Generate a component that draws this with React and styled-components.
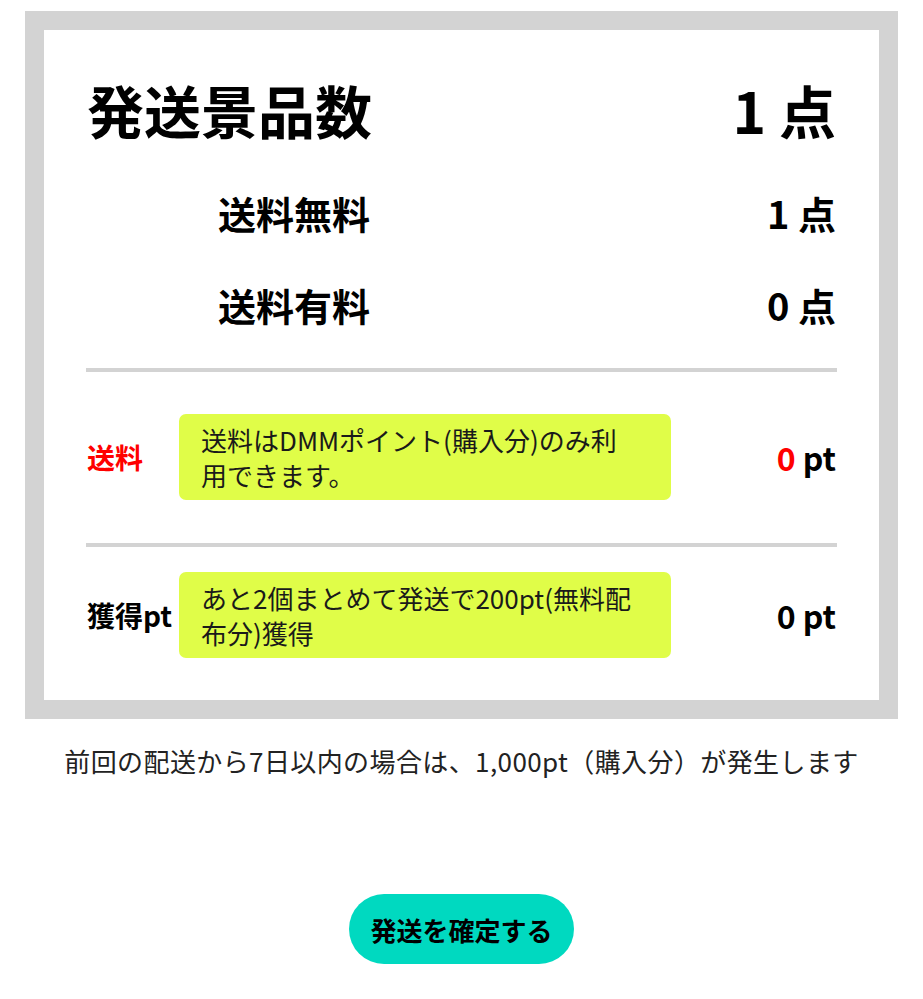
import React from "react";
import styled, { createGlobalStyle } from "styled-components";

const GlobalStyle = createGlobalStyle`
  html, body {
    margin: 0;
    padding: 0;
    background: #ffffff;
  }
  body {
    font-family: "Noto Sans CJK JP", "Noto Sans", sans-serif;
    color: #000;
  }
`;

const Page = styled.div`
  padding: 11px 25px 0;
  display: flex;
  flex-direction: column;
  align-items: stretch;
`;

const Card = styled.section`
  border: 19px solid #d3d3d3;
  background: #fff;
  padding: 39px 43px 42px;
  display: flex;
  flex-direction: column;
`;

const TotalRow = styled.div`
  display: flex;
  justify-content: space-between;
  align-items: center;
  height: 80px;
  font-size: 57px;
  font-weight: 700;
  margin-bottom: 33px;
`;

const SubList = styled.div`
  display: flex;
  flex-direction: column;
  gap: 32px;
  padding-left: 131px;
  margin-bottom: 34px;
`;

const SubRow = styled.div`
  display: flex;
  justify-content: space-between;
  align-items: center;
  height: 60px;
  font-size: 38px;
  font-weight: 700;
`;

const Divider = styled.hr`
  border: none;
  height: 4px;
  background: #d3d3d3;
  margin: 0 -1px;
`;

const PointRow = styled.div`
  display: flex;
  align-items: center;
  gap: 5px;
  padding: ${(p) => p.$pad};
`;

const Label = styled.div`
  min-width: 87px;
  white-space: nowrap;
  font-size: 28px;
  font-weight: 700;
  color: ${(p) => (p.$red ? "#ff0000" : "#000")};
`;

const Notice = styled.div`
  flex: 1;
  box-sizing: border-box;
  height: 86px;
  padding: 8px ${(p) => p.$padRight || 22}px 8px 22px;
  background: #e0fd48;
  border-radius: 7px;
  font-size: 26px;
  line-height: 35px;
  font-weight: 400;
  color: #1a1a1a;
`;

const Value = styled.div`
  min-width: 160px;
  text-align: right;
  font-size: 32px;
  font-weight: 700;
  white-space: nowrap;
`;

const Red = styled.span`
  color: #ff0000;
`;

const Note = styled.p`
  margin: 24px 0 0;
  text-align: center;
  font-size: 26px;
  line-height: 36px;
  letter-spacing: 0.4px;
  color: #222;
`;

const ConfirmButton = styled.button`
  align-self: center;
  margin-top: 115px;
  width: 225px;
  height: 70px;
  border: none;
  border-radius: 35px;
  background: #00d9c0;
  font-family: "Noto Sans CJK JP", "Noto Sans", sans-serif;
  font-size: 26px;
  font-weight: 700;
  color: #000;
  cursor: pointer;
`;

export default function App() {
  return (
    <>
      <GlobalStyle />
      <Page>
        <Card>
          <TotalRow>
            <span>発送景品数</span>
            <span>1 点</span>
          </TotalRow>
          <SubList>
            <SubRow>
              <span>送料無料</span>
              <span>1 点</span>
            </SubRow>
            <SubRow>
              <span>送料有料</span>
              <span>0 点</span>
            </SubRow>
          </SubList>
          <Divider />
          <PointRow $pad="42px 0 43px">
            <Label $red>送料</Label>
            <Notice $padRight={44}>送料はDMMポイント(購入分)のみ利用できます。</Notice>
            <Value>
              <Red>0</Red> pt
            </Value>
          </PointRow>
          <Divider />
          <PointRow $pad="25px 0 0">
            <Label>獲得pt</Label>
            <Notice>あと2個まとめて発送で200pt(無料配布分)獲得</Notice>
            <Value>0 pt</Value>
          </PointRow>
        </Card>
        <Note>前回の配送から7日以内の場合は、1,000pt（購入分）が発生します</Note>
        <ConfirmButton type="button">発送を確定する</ConfirmButton>
      </Page>
    </>
  );
}
